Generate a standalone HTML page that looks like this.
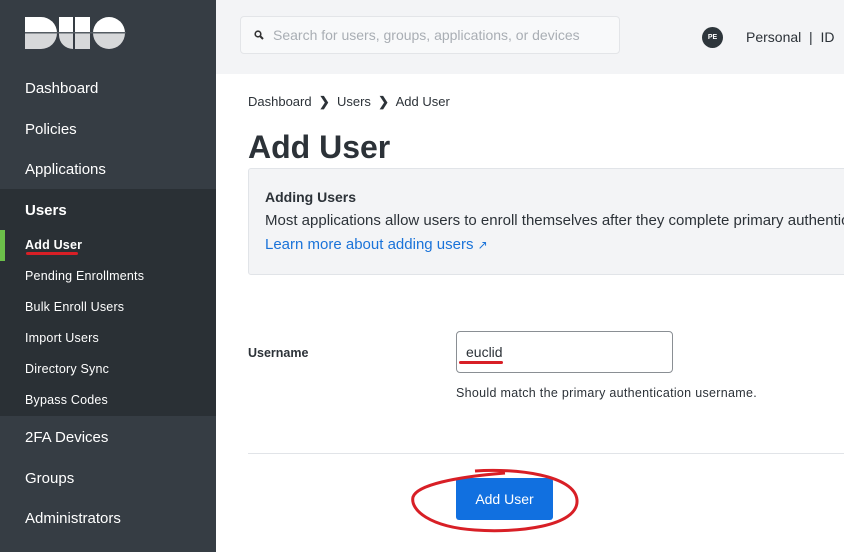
<!DOCTYPE html>
<html><head><style>
*{margin:0;padding:0;box-sizing:border-box}
body{width:844px;height:552px;overflow:hidden;font-family:"Liberation Sans",sans-serif;background:#fff;position:relative}
.sb{position:absolute;left:0;top:0;width:216px;height:552px;background:#363d44}
.sub{position:absolute;left:0;top:189px;width:216px;height:227px;background:#2a3035}
.n{position:absolute;left:25px;color:#fff;font-size:15px}
.s{position:absolute;left:25px;color:#fff;font-size:12.5px;letter-spacing:0.2px}
.top{position:absolute;left:216px;top:0;width:628px;height:74px;background:#f3f4f6}
.search{position:absolute;left:240px;top:16px;width:380px;height:38px;background:#f8f9fa;border:1px solid #e3e5e8;border-radius:4px;color:#a9aeb4;font-size:14px;line-height:36px;padding-left:32px}
a{color:#2c3238}
</style></head><body>
<div class="sb"></div><div class="sub"></div>
<svg style="position:absolute;left:25px;top:17px" width="101" height="33" viewBox="0 0 101 33">
<path d="M0 0H16A16 16 0 0 1 16 32H0Z" fill="#fff"/>
<path d="M34 0H48V32H48A14 14 0 0 1 34 18Z" fill="#fff"/>
<rect x="50" y="0" width="15" height="32" fill="#fff"/>
<circle cx="84" cy="16" r="16" fill="#fff"/>
<rect x="0" y="16" width="101" height="17" fill="#363d44" opacity="0.2"/>
<rect x="0" y="15" width="101" height="1.5" fill="#555c63"/>
</svg>
<div class="n" style="top:80px">Dashboard</div>
<div class="n" style="top:121px">Policies</div>
<div class="n" style="top:161px">Applications</div>
<div class="n" style="top:202px;font-weight:bold">Users</div>
<div style="position:absolute;left:0;top:230px;width:5px;height:31px;background:#6cc04a"></div>
<div class="s" style="top:238px;font-weight:bold">Add User</div>
<div style="position:absolute;left:26px;top:252px;width:52px;height:3px;background:#d81f26;border-radius:2px"></div>
<div class="s" style="top:269px">Pending Enrollments</div>
<div class="s" style="top:300px">Bulk Enroll Users</div>
<div class="s" style="top:331px">Import Users</div>
<div class="s" style="top:362px">Directory Sync</div>
<div class="s" style="top:393px">Bypass Codes</div>
<div class="n" style="top:429px">2FA Devices</div>
<div class="n" style="top:470px">Groups</div>
<div class="n" style="top:510px">Administrators</div>
<div class="top"></div>
<div class="search"><svg style="position:absolute;left:13px;top:13px" width="10" height="10" viewBox="0 0 10 10"><circle cx="4" cy="4" r="2.8" fill="none" stroke="#333" stroke-width="1.6"/><path d="M6 6L9 9" stroke="#333" stroke-width="2"/></svg>Search for users, groups, applications, or devices</div>
<div style="position:absolute;left:702px;top:27px;width:21px;height:21px;border-radius:50%;background:#2d353b;color:#fff;font-size:7px;font-weight:bold;text-align:center;line-height:21px">PE</div>
<div style="position:absolute;left:746px;top:29px;font-size:14px;color:#2c3238;white-space:nowrap">Personal &nbsp;| &nbsp;ID</div>
<div style="position:absolute;left:248px;top:94px;font-size:13px;color:#2c3238;white-space:nowrap"><a>Dashboard</a> &nbsp;<b>&#x276F;</b>&nbsp; <a>Users</a> &nbsp;<b>&#x276F;</b>&nbsp; Add User</div>
<div style="position:absolute;left:248px;top:129px;font-size:32px;font-weight:bold;color:#2c3238">Add User</div>
<div style="position:absolute;left:248px;top:168px;width:610px;height:107px;background:#f3f4f6;border:1px solid #e1e4e8;border-radius:3px"></div>
<div style="position:absolute;left:265px;top:189px;font-size:14px;font-weight:bold;color:#2c3238">Adding Users</div>
<div style="position:absolute;left:265px;top:212px;font-size:15px;color:#2c3238;white-space:nowrap">Most applications allow users to enroll themselves after they complete primary authentication</div>
<div style="position:absolute;left:265px;top:236px;font-size:15px;color:#1a73d9">Learn more about adding users <span style="font-size:12px">&#x2197;</span></div>
<div style="position:absolute;left:248px;top:346px;font-size:12.5px;font-weight:bold;color:#2c3238">Username</div>
<div style="position:absolute;left:456px;top:331px;width:217px;height:42px;border:1px solid #8a8f94;border-radius:4px;font-size:14px;color:#2c3238;padding:12px 9px">euclid</div>
<div style="position:absolute;left:459px;top:361px;width:44px;height:3px;background:#d81f26;border-radius:2px"></div>
<div style="position:absolute;left:456px;top:386px;font-size:12.5px;letter-spacing:0.3px;color:#2c3238;white-space:nowrap">Should match the primary authentication username.</div>
<div style="position:absolute;left:248px;top:453px;width:596px;height:1px;background:#e1e4e8"></div>
<div style="position:absolute;left:456px;top:478px;width:97px;height:42px;background:#1170e0;border-radius:3px;color:#fff;font-size:14px;text-align:center;line-height:42px">Add User</div>
<svg style="position:absolute;left:405px;top:465px" width="180" height="75"><path d="M70 6C110 3 170 10 172 35C174 62 110 68 70 65C25 62 5 45 8 32C12 20 50 12 100 8" fill="none" stroke="#d81f26" stroke-width="3"/></svg>
</body></html>
